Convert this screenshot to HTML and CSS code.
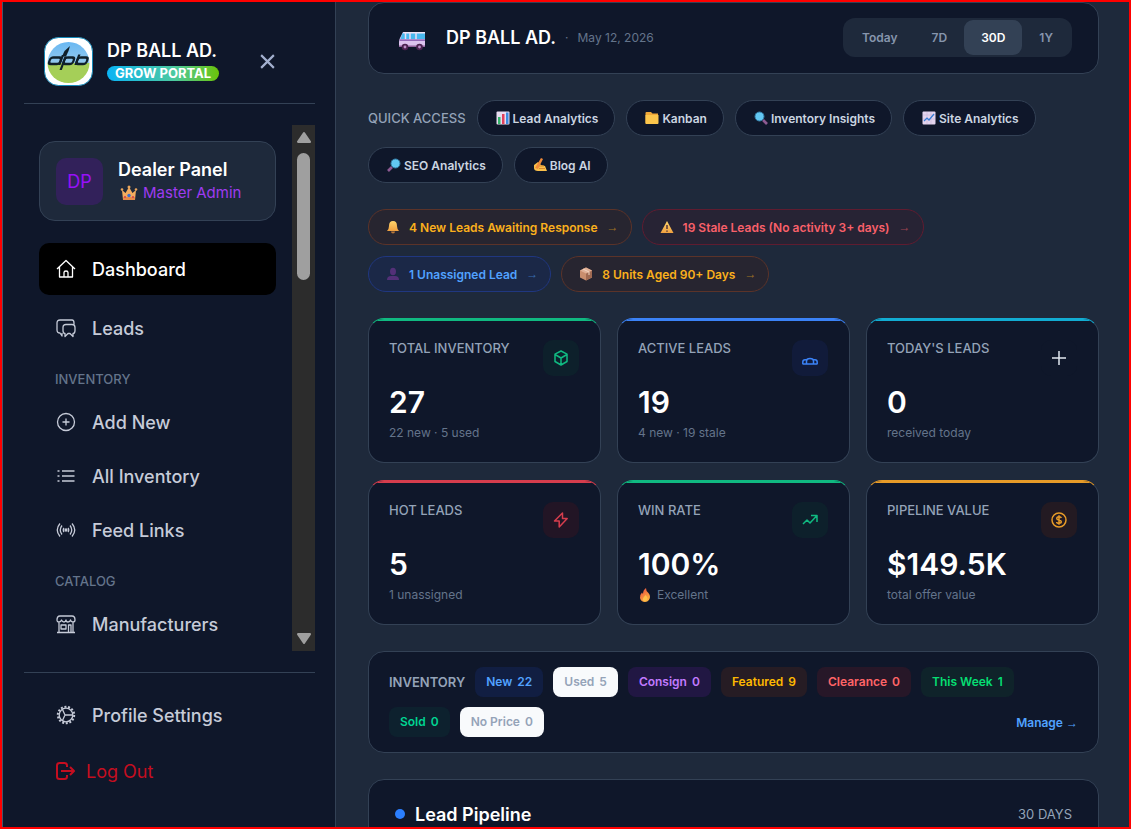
FILE: index.html
```html
<!DOCTYPE html>
<html lang="en">
<head>
<meta charset="utf-8">
<meta name="viewport" content="width=device-width, initial-scale=1">
<title>DP BALL AD. Grow Portal</title>
<link rel="stylesheet" href="styles.css">
</head>
<body>
<svg class="defs" aria-hidden="true">
  <defs>
    <linearGradient id="sky" x1="0" y1="0" x2="0" y2="1"><stop offset="0" stop-color="#69b8f2"/><stop offset="1" stop-color="#93c9ee"/></linearGradient>
    <linearGradient id="flame" x1="0" y1="0" x2="0.6" y2="1"><stop offset="0" stop-color="#e8473f"/><stop offset="1" stop-color="#fbb040"/></linearGradient>
    <linearGradient id="gold" x1="0" y1="0" x2="0" y2="1"><stop offset="0" stop-color="#ffd56b"/><stop offset="1" stop-color="#f0a040"/></linearGradient>
  </defs>
</svg>

<aside class="sidebar">
  <header class="brand">
    <svg class="brand-logo" viewBox="0 0 49 49" role="img" aria-label="dpb logo">
      <rect x="0.5" y="0.5" width="48" height="48" rx="14" fill="#fff" stroke="#1489b8"/>
      <path d="M3.5 26a21 21 0 0 1 42 0z" fill="url(#sky)"/>
      <path d="M3.500 26a21 20 0 0 0 42 0z" fill="#a5cf58"/>
      <g transform="translate(8.700 0) skewX(-20)" fill="none" stroke="#10202a" stroke-width="2.300">
        <rect x="5.500" y="20.500" width="11" height="6.500" rx="2.500"/>
        <path d="M16.800 28V18"/>
        <rect x="20" y="20.500" width="9.500" height="6.500" rx="2.500"/>
        <path d="M20 19.500V33"/>
        <rect x="33" y="20.500" width="10" height="6.500" rx="2.500"/>
        <path d="M33 28V17.500"/>
      </g>
      <path d="M18 19.500l2.500-5.500 5.500-5-1.500 5-2.500 5.500z" fill="#10202a"/>
    </svg>
    <div class="brand-text">
      <strong class="brand-name">DP BALL AD.</strong>
      <span class="brand-tag">GROW PORTAL</span>
    </div>
    <button class="close" type="button" aria-label="Close menu">
      <svg viewBox="0 0 16 16"><path d="M2 2l12 12M14 2L2 14"/></svg>
    </button>
  </header>

  <div class="nav-scroll">
    <nav class="nav">
      <div class="profile">
        <span class="avatar">DP</span>
        <div>
          <strong class="profile-name">Dealer Panel</strong>
          <span class="profile-role">
            <svg viewBox="0 0 18 16"><path d="M2 5l3.500 3L9 2l3.500 6L16 5l-1 10H3z" fill="#f3ac5f"/><path d="M3 12h12v3H3z" fill="#e58a48"/><circle cx="2" cy="4.500" r="1.300" fill="#e9a55c"/><circle cx="9" cy="2" r="1.500" fill="#e9a55c"/><circle cx="16" cy="4.500" r="1.300" fill="#e9a55c"/><circle cx="9" cy="10.500" r="1.700" fill="#3b6fd0"/><circle cx="5" cy="12" r="1" fill="#d33b4b"/><circle cx="13" cy="12" r="1" fill="#d33b4b"/></svg>
            Master Admin
          </span>
        </div>
      </div>
      <a class="nav-item active" href="#dashboard">
        <svg viewBox="0 0 20 20"><path d="M1 10l9-8.500 9 8.500M3.500 8v10h13V8M8 18v-4.500q0-1.500 2-1.500t2 1.500V18"/></svg>
        Dashboard
      </a>
      <a class="nav-item" href="#leads">
        <svg viewBox="0 0 20 20"><path d="M6 15v3l-2-3q-3 0-3-3V5q0-3 3-3h12q2 0 2 3v1.500M10 6.500h6q3 0 3 3v3q0 3-2 3v3l-3-3h-2l-3 3v-3q-2 0-2-3v-3q0-3 3-3z"/></svg>
        Leads
      </a>
      <h2 class="nav-label">INVENTORY</h2>
      <a class="nav-item" href="#add">
        <svg viewBox="0 0 20 20"><circle cx="10" cy="10" r="8.500"/><path d="M10 6.500v7M6.500 10h7"/></svg>
        Add New
      </a>
      <a class="nav-item" href="#inventory">
        <svg viewBox="0 0 20 20"><path d="M6 5h12.500M6 10h12.500M6 15h12.500M1.500 5h2M1.500 10h2M1.500 15h2"/></svg>
        All Inventory
      </a>
      <a class="nav-item" href="#feeds">
        <svg viewBox="0 0 20 20"><path d="M4 3.500q-5.500 6.500 0 13M16 3.500q5.500 6.500 0 13M6 5.500q-3.500 4.500 0 9M14 5.500q3.500 4.500 0 9M8 8q-1.500 2 0 4M12 8q1.500 2 0 4"/><circle class="solid" cx="10" cy="10" r="1"/></svg>
        Feed Links
      </a>
      <h2 class="nav-label">CATALOG</h2>
      <a class="nav-item" href="#manufacturers">
        <svg viewBox="0 0 20 20"><path d="M1 6q0-4 3-4h12q3 0 3 4 0 2-2 2-2 0-2.500-2Q14 8 12 8T10 6Q9.500 8 8 8T5.500 6Q5 8 3 8 1 8 1 6zM3 8v10M17 8v10M1 18.500h18M5 11h5v4H5zM12.500 18v-7H15v7"/></svg>
        Manufacturers
      </a>
    </nav>
    <div class="scrollbar" aria-hidden="true">
      <svg viewBox="0 0 16 12"><path d="M8 2l5.500 8h-11z"/></svg>
      <span class="thumb"></span>
      <svg viewBox="0 0 16 12"><path d="M8 10L2.500 2h11z"/></svg>
    </div>
  </div>

  <footer class="account">
    <a class="nav-item" href="#profile">
      <svg viewBox="0 0 20 20"><circle cx="10" cy="10" r="6.800"/><circle class="teeth" cx="10" cy="10" r="8.200"/><path d="M9 10L6.500 4.500M9 10l-2.500 5.500M9 10h7.500"/></svg>
      Profile Settings
    </a>
    <a class="nav-item logout" href="#logout">
      <svg viewBox="0 0 20 20"><path d="M12 6V4.500Q12 2 9.500 2h-5Q2 2 2 4.500v11Q2 18 4.500 18h5q2.500 0 2.500-2.500V14M6 10h12.500M15 6l4 4-4 4"/></svg>
      Log Out
    </a>
  </footer>
</aside>

<main class="content">
  <header class="card topbar">
    <svg class="van" viewBox="0 0 28 22"><path d="M5 2h22v15H1v-5q0-2 1-4z" fill="#dcc3ee"/><path d="M4.500 3H27v6H2.500z" fill="#48b8ee"/><path d="M6 2h21v1.500H5z" fill="#eee2f5"/><path d="M7.500 3v6M12 3v7M18 3v7" stroke="#eadcf4" stroke-width="1.500"/><path d="M2 9.500h25v1.200H1.500z" fill="#7c4aa5"/><path d="M1 15.500h26V17H1z" fill="#94649f"/><g fill="#4b2350"><circle cx="7" cy="17" r="3.300"/><circle cx="21.500" cy="17" r="3.300"/></g><g fill="#bd91c9"><circle cx="7" cy="17" r="1.400"/><circle cx="21.500" cy="17" r="1.400"/></g></svg>
    <h1 class="title">DP BALL AD.</h1>
    <span class="date"><span>·</span>May 12, 2026</span>
    <div class="range" role="group" aria-label="Period">
      <button type="button">Today</button>
      <button type="button">7D</button>
      <button type="button" class="on" aria-pressed="true">30D</button>
      <button type="button">1Y</button>
    </div>
  </header>

  <nav class="quick" aria-label="Quick access">
    <span class="caption">QUICK ACCESS</span>
    <a class="pill" href="#lead-analytics"><svg viewBox="0 0 14 14"><rect x="0.500" y="0.500" width="13" height="13" rx="1" fill="#e8dcf0"/><path d="M2 6h2.500v7H2z" fill="#35b46a"/><path d="M6 3h2.500v10H6z" fill="#e0405c"/><path d="M10 1.500h2.500V13H10z" fill="#3b8be0"/></svg>Lead Analytics</a>
    <a class="pill" href="#kanban"><svg viewBox="0 0 14 14"><path d="M0.500 2q0-1 1-1H6l1.500 1.500H13V12q0 1-1 1H1.500q-1 0-1-1z" fill="#f0a838"/><path d="M0.500 4h13v8q0 1-1 1h-11q-1 0-1-1z" fill="#fcc64c"/></svg>Kanban</a>
    <a class="pill" href="#insights"><svg viewBox="0 0 14 14"><path d="M9 9l4 4" stroke="#8d5a92" stroke-width="2.600"/><circle cx="5.500" cy="5.500" r="4.500" fill="#62c7f2" stroke="#347da6"/></svg>Inventory Insights</a>
    <a class="pill" href="#site"><svg viewBox="0 0 14 14"><rect x="0.500" y="0.500" width="13" height="13" rx="1" fill="#e3d4ee"/><path d="M1 4h12M1 8h12M5 1v12M9 1v12" stroke="#c9b7d8" stroke-width="0.600"/><path d="M2 10l3-3 2 2 5-6" fill="none" stroke="#347bd5" stroke-width="1.200"/></svg>Site Analytics</a>
    <a class="pill" href="#seo"><svg viewBox="0 0 14 14"><path d="M5 9l-4 4" stroke="#8d5a92" stroke-width="2.600"/><circle cx="8.500" cy="5.500" r="4.500" fill="#62c7f2" stroke="#347da6"/></svg>SEO Analytics</a>
    <a class="pill" href="#blog"><svg viewBox="0 0 14 14"><path d="M1 7l4-3 3 3 4 1 2 5H5q-4 0-4-3z" fill="#fbc04a"/><path d="M2 10L8 0l2 1-5 10z" fill="#f08a3a"/><path d="M6 8h5M6 10.500h6" stroke="#d98a2e"/></svg>Blog AI</a>
  </nav>

  <section class="alerts" aria-label="Alerts">
    <a class="pill amber" href="#new"><svg viewBox="0 0 14 14"><path d="M7 1q4 0 4 5 0 3 2 5H1q2-2 2-5 0-5 4-5z" fill="url(#gold)"/><path d="M5 11.500h4q0 2-2 2t-2-2z" fill="#b9783a"/></svg>4 New Leads Awaiting Response<span>→</span></a>
    <a class="pill red" href="#stale"><svg viewBox="0 0 14 14"><path d="M7 1l6.500 12H0.500z" fill="url(#gold)"/><path d="M7 5v4M7 10.500v1.300" stroke="#4a2c35" stroke-width="1.400"/></svg>19 Stale Leads (No activity 3+ days)<span>→</span></a>
    <a class="pill blue" href="#unassigned"><svg viewBox="0 0 14 14"><ellipse cx="7" cy="4.500" rx="3" ry="3.800" fill="#533078"/><path d="M1 13q0-4 4-4h4q4 0 4 4z" fill="#533078"/></svg>1 Unassigned Lead<span>→</span></a>
    <a class="pill amber" href="#aged"><svg viewBox="0 0 14 14"><path d="M7 0.500l6 3v7l-6 3-6-3v-7z" fill="#c98e6e"/><path d="M7 6.500l6-3v7l-6 3z" fill="#a06a52"/><path d="M1 3.500l6-3 6 3-6 3z" fill="#e0b096"/><path d="M4 2l6 3v3" fill="none" stroke="#f1d5c2"/></svg>8 Units Aged 90+ Days<span>→</span></a>
  </section>

  <section class="kpis" aria-label="Key figures">
    <article class="card kpi green">
      <div class="kpi-head"><h2>TOTAL INVENTORY</h2><span class="badge"><svg viewBox="0 0 16 16"><path d="M8 1l6 3.200v7.300L8 15l-6-3.500V4.200zM2 4.500L8 8l6-3.500M8 8v7"/></svg></span></div>
      <p class="value">27</p><p class="sub">22 new · 5 used</p>
    </article>
    <article class="card kpi blue">
      <div class="kpi-head"><h2>ACTIVE LEADS</h2><span class="badge"><svg viewBox="0 0 16 16"><path d="M0.800 14v-2q0-2.300 2.200-2.300h1.500M15.200 14v-2q0-2.300-2.200-2.300h-1.500M0.500 14h15M4.500 14v-3q0-2.500 3.500-2.500t3.500 2.500v3"/></svg></span></div>
      <p class="value">19</p><p class="sub">4 new · 19 stale</p>
    </article>
    <article class="card kpi cyan">
      <div class="kpi-head"><h2>TODAY'S LEADS</h2><span class="badge"><svg viewBox="0 0 16 16"><path d="M8 1v14M1 8h14"/></svg></span></div>
      <p class="value">0</p><p class="sub">received today</p>
    </article>
    <article class="card kpi rose">
      <div class="kpi-head"><h2>HOT LEADS</h2><span class="badge"><svg viewBox="0 0 16 16"><path d="M9.500 1L1.500 9h4.700v6l8-8.500H9.500z"/></svg></span></div>
      <p class="value">5</p><p class="sub">1 unassigned</p>
    </article>
    <article class="card kpi green">
      <div class="kpi-head"><h2>WIN RATE</h2><span class="badge"><svg viewBox="0 0 16 16"><path d="M1 12l4-4 3 3 6.500-7M9 3.500h6V10"/></svg></span></div>
      <p class="value">100%</p>
      <p class="sub"><svg viewBox="0 0 14 14"><path d="M8 0q0 3 2 4.500 3 3 1.500 6.500-1.500 3-4.500 3-4 0-5-4Q1.500 7 4 4.500l1 1.500Q5 2 8 0z" fill="url(#flame)"/><path d="M7.500 7Q11 10 8.500 12.500q-2 1.500-3.500 0Q4 10.500 7.500 7z" fill="#fdc04a"/></svg>Excellent</p>
    </article>
    <article class="card kpi orange">
      <div class="kpi-head"><h2>PIPELINE VALUE</h2><span class="badge"><svg viewBox="0 0 16 16"><circle cx="8" cy="8" r="7"/><path d="M10.300 6Q10 4.700 8 4.700T5.700 6.200Q5.700 7.600 8 8t2.300 1.800Q10.300 11.300 8 11.300T5.700 10M8 3.300v9.400"/></svg></span></div>
      <p class="value">$149.5K</p><p class="sub">total offer value</p>
    </article>
  </section>

  <section class="card stock">
    <h2 class="caption">INVENTORY</h2>
    <a class="chip c-blue" href="#s-new">New <b>22</b></a>
    <a class="chip c-white" href="#s-used">Used <b>5</b></a>
    <a class="chip c-purple" href="#s-consign">Consign <b>0</b></a>
    <a class="chip c-amber" href="#s-featured">Featured <b>9</b></a>
    <a class="chip c-red" href="#s-clearance">Clearance <b>0</b></a>
    <a class="chip c-green" href="#s-week">This Week <b>1</b></a>
    <a class="chip c-emerald" href="#s-sold">Sold <b>0</b></a>
    <a class="chip c-white" href="#s-noprice">No Price <b>0</b></a>
    <a class="manage" href="#manage">Manage <span>→</span></a>
  </section>

  <section class="card pipeline">
    <span class="dot"></span>
    <h2>Lead Pipeline</h2>
    <span class="period">30 DAYS</span>
  </section>
</main>
</body>
</html>
```
FILE: styles.css
```css
* { box-sizing: border-box; }

body {
  margin: 0;
  height: 100vh;
  display: flex;
  overflow: hidden;
  border: 2px solid #ff0000;
  background: #1e293b;
  color: #fff;
  font-family: Inter, "Liberation Sans", sans-serif;
  font-size: 12px;
}

h1, h2, p { margin: 0; }
a { color: inherit; text-decoration: none; }
button { font: inherit; border: 0; background: none; cursor: pointer; }
svg { flex: none; }
.defs { position: absolute; width: 0; height: 0; }

.card {
  background: #0f172a;
  border: 1px solid #334155;
  border-radius: 16px;
}

/* Sidebar */
.sidebar {
  flex: none;
  width: 334px;
  display: flex;
  flex-direction: column;
  padding: 0 20px 0 21px;
  background: #0f172a;
  border-left: 1px solid #475569;
  border-right: 1px solid #334155;
}

.brand {
  display: flex;
  align-items: center;
  gap: 14px;
  height: 102px;
  padding: 18px 39px 0 20px;
  border-bottom: 1px solid #334155;
}
.brand-logo { width: 49px; height: 49px; }
.brand-text { flex: 1; display: flex; flex-direction: column; align-items: flex-start; gap: 4px; padding-bottom: 2px; }
.brand-name { font-size: 18px; font-weight: 600; line-height: 22px; }
.brand-tag {
  padding: 0 8px;
  border-radius: 8px;
  background: linear-gradient(90deg, #0ab4f5, #4cc9a0 60%, #6cc409);
  font-size: 13px;
  font-weight: 700;
  line-height: 15px;
}
.close { display: flex; padding: 0; }
.close svg { width: 17px; height: 17px; fill: none; stroke: #a3b0cf; stroke-width: 2; }

.nav-scroll {
  display: flex;
  height: 526px;
  margin: 21px 0;
  overflow: hidden;
}
.nav { flex: 1; padding: 16px 16px 0 15px; }

.profile {
  display: flex;
  align-items: center;
  gap: 15px;
  height: 80px;
  margin-bottom: 22px;
  padding: 0 16px;
  background: #1e293b;
  border: 1px solid #334155;
  border-radius: 16px;
}
.avatar {
  display: grid;
  place-items: center;
  width: 47px;
  height: 47px;
  border-radius: 10px;
  background: #32215a;
  color: #9810fa;
  font-size: 18px;
}
.profile-name { display: block; font-size: 18px; font-weight: 600; line-height: 24px; }
.profile-role { display: flex; align-items: center; gap: 5px; padding-left: 2px; color: #9f3bf0; font-size: 15px; line-height: 22px; }
.profile-role svg { width: 18px; height: 16px; }

.nav-item {
  display: flex;
  align-items: center;
  gap: 16px;
  height: 52px;
  padding-left: 17px;
  border-radius: 10px;
  color: #c6cbd8;
  font-size: 18px;
  font-weight: 500;
}
.nav-item + .nav-item { margin-top: 2px; }
.nav-item.active + .nav-item { margin-top: 7px; }
.nav-item svg { width: 20px; height: 20px; fill: none; stroke: currentColor; stroke-width: 1.3; stroke-linejoin: round; }
.nav-item .solid { fill: currentColor; }
.nav-item .teeth { stroke-dasharray: 2 1.68; stroke-width: 2; }
.nav-item.active { background: #000; color: #fff; }
.nav-label { padding: 16px 16px 8px; color: #64748b; font-size: 13px; font-weight: 500; line-height: 18px; }

.scrollbar {
  width: 23px;
  display: flex;
  flex-direction: column;
  align-items: center;
  gap: 9px;
  padding: 6px 0;
  background: #2c2c2c;
}
.scrollbar svg { width: 18px; height: 13px; fill: #9f9f9f; stroke: #9f9f9f; stroke-width: 2; stroke-linejoin: round; }
.thumb { width: 13px; height: 127px; margin-bottom: auto; border-radius: 7px; background: #9f9f9f; }

.account { padding: 16px 15px 0; border-top: 1px solid #334155; }
.account .logout { gap: 11px; margin-top: 4px; padding-left: 16px; color: #c50e20; font-weight: 400; }
.account .logout svg { stroke-width: 2; }

/* Main column */
.content {
  flex: 1;
  min-width: 0;
  display: flex;
  flex-direction: column;
  gap: 26px;
  padding: 0 30px 0 32px;
  overflow: hidden;
}
.content > * { flex: none; }

.topbar { display: flex; align-items: center; height: 72px; padding: 0 26px 2px 29px; }
.van { width: 28px; height: 22px; margin-right: 20px; margin-top: 8px; }
.title { font-size: 18px; font-weight: 600; }
.date { display: flex; gap: 9px; margin-left: 9px; color: #64748b; font-size: 12px; }
.range { display: flex; margin-left: auto; padding: 2px; border-radius: 12px; background: #1e293b; }
.range button { height: 35px; padding: 0 17px; border-radius: 9px; color: #8695ad; font-weight: 600; }
.range .on { background: #334155; color: #fff; }

.caption { color: #94a3b8; font-size: 13px; font-weight: 500; line-height: 20px; }
h2.caption { font-weight: 600; }

.quick, .alerts { display: flex; flex-wrap: wrap; align-items: center; gap: 11px; }
.alerts { column-gap: 10px; }
.pill {
  display: flex;
  align-items: center;
  gap: 3px;
  height: 36px;
  padding: 0 16px 0 18px;
  border: 1px solid #334155;
  border-radius: 18px;
  background: #0f172a;
  color: #cbd5e1;
  font-weight: 600;
}
.pill svg { width: 14px; height: 14px; }

.alerts .pill { gap: 9px; padding: 0 12px 0 17px; }
.alerts span, .manage span { font-family: "Liberation Sans", sans-serif; font-weight: 400; }
.alerts span { opacity: 0.55; }
.pill.amber { background: #272530; border-color: #5b3329; color: #fbb01c; }
.pill.red { background: #272334; border-color: #5f1c30; color: #f9606a; }
.pill.blue { background: #1b2847; border-color: #203780; color: #51a2ff; }

.kpis { display: grid; grid-template-columns: repeat(3, 1fr); gap: 17px 16px; }
.kpi {
  --tone: #10b981;
  --tint: #0d202b;
  position: relative;
  overflow: hidden;
  height: 145px;
  padding: 21px 21px 0 20px;
}
.kpi::before { content: ""; position: absolute; inset: 0 0 auto; height: 2px; background: var(--tone); }
.kpi.card { border-top-color: var(--tone); }
.kpi.blue { --tone: #3b82f6; --tint: #111b3a; }
.kpi.cyan { --tone: #12acd2; --tint: #0f172a; }
.kpi.rose { --tone: #d63d4d; --tint: #221525; }
.kpi.orange { --tone: #e79b28; --tint: #231a22; }
.kpi-head { display: flex; justify-content: space-between; align-items: flex-start; }
.kpi-head h2 { color: #94a3b8; font-size: 13px; font-weight: 500; line-height: 16px; }
.badge { display: grid; place-items: center; width: 36px; height: 36px; border-radius: 10px; background: var(--tint); color: var(--tone); }
.badge svg { width: 16px; height: 16px; fill: none; stroke: currentColor; stroke-width: 1.5; stroke-linejoin: round; }
.cyan .badge { color: #e2e8f0; }
.value { margin-top: 6px; font-size: 30px; font-weight: 600; line-height: 40px; }
.sub { display: flex; align-items: center; gap: 5px; margin-top: 2px; color: #64748b; line-height: 18px; }
.sub svg { width: 14px; height: 14px; }

.stock { display: flex; flex-wrap: wrap; align-items: center; gap: 10px; padding: 15px 20px; }
.chip { display: flex; gap: 5px; padding: 0 11px; border-radius: 8px; font-weight: 600; line-height: 30px; }
.chip b { font-weight: 600; }
.c-blue { background: #111e42; color: #51a2ff; }
.c-white { background: #f8fafc; color: #94a3b8; }
.c-purple { background: #211743; color: #c27aff; }
.c-amber { background: #261c24; color: #ffb900; }
.c-red { background: #271728; color: #ff6467; }
.c-green { background: #0f232a; color: #05df72; }
.c-emerald { background: #0d212e; color: #00d492; }
.manage { margin-left: auto; color: #51a2ff; font-weight: 600; }

.pipeline { display: flex; align-items: center; gap: 10px; height: 70px; padding: 0 26px; }
.pipeline h2 { font-size: 18px; font-weight: 600; }
.dot { width: 10px; height: 10px; border-radius: 50%; background: #2b7fff; }
.period { margin-left: auto; color: #94a3b8; font-size: 13px; }
```
